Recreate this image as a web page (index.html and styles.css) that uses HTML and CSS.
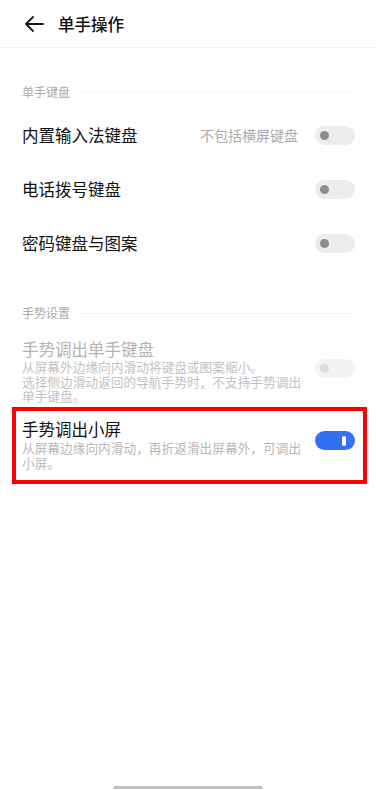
FILE: index.html
```html
<!DOCTYPE html>
<html lang="zh-CN">
<head>
<meta charset="utf-8">
<title>单手操作</title>
<link rel="stylesheet" href="styles.css">
</head>
<body>
<div class="page">
  <header class="header">
    <svg class="back" width="20" height="16" viewBox="0 0 20 16" aria-hidden="true">
      <path d="M19 8H2M9 1L2 8L9 15" fill="none" stroke="#1a1a1a" stroke-width="1.8" stroke-linecap="round" stroke-linejoin="round"/>
    </svg>
    <h1 class="title">单手操作</h1>
  </header>

  <div class="section-label first"><span>单手键盘</span></div>
  <div class="row">
    <span class="row-title">内置输入法键盘</span>
    <span class="row-hint">不包括横屏键盘</span>
    <span class="toggle"></span>
  </div>
  <div class="row">
    <span class="row-title">电话拨号键盘</span>
    <span class="toggle"></span>
  </div>
  <div class="row">
    <span class="row-title">密码键盘与图案</span>
    <span class="toggle"></span>
  </div>

  <div class="section-label second"><span>手势设置</span></div>
  <div class="row tall disabled">
    <div class="text">
      <div class="row-title">手势调出单手键盘</div>
      <div class="desc">从屏幕外边缘向内滑动将键盘或图案缩小。<br>选择侧边滑动返回的导航手势时，不支持手势调出单手键盘。</div>
    </div>
    <span class="toggle"></span>
  </div>
  <div class="row tall highlight">
    <div class="text">
      <div class="row-title">手势调出小屏</div>
      <div class="desc">从屏幕边缘向内滑动，再折返滑出屏幕外，可调出小屏。</div>
    </div>
    <span class="toggle on"></span>
  </div>

  <div class="spacer"></div>
  <div class="home-bar"></div>
</div>
</body>
</html>
```

FILE: styles.css
```css
html, body {
  margin: 0;
  padding: 0;
  background: #ffffff;
}

body {
  font-family: "Noto Sans CJK SC", "Noto Sans", sans-serif;
  color: #111111;
}

.page {
  width: 376px;
  height: 790px;
  display: flex;
  flex-direction: column;
  overflow: hidden;
}

.header {
  height: 47px;
  display: flex;
  align-items: center;
  padding-left: 24px;
  border-bottom: 1px solid #f3f3f3;
}

.back {
  display: block;
  margin-right: 14px;
  margin-top: 1px;
}

.title {
  margin: 0;
  font-size: 16.5px;
  font-weight: 500;
  line-height: 22px;
  color: #111111;
}

.section-label {
  display: flex;
  align-items: center;
  gap: 9px;
  height: 16px;
  padding: 0 20px 0 22px;
  font-size: 12px;
  line-height: 16px;
  color: #aaaaaa;
}

.section-label::after {
  content: "";
  flex: 1;
  height: 1px;
  background: #f4f4f4;
}

.section-label.first {
  margin-top: 36px;
  margin-bottom: 8px;
}

.section-label.second {
  margin-top: 35px;
  margin-bottom: 17px;
}

.row {
  display: flex;
  align-items: center;
  height: 54px;
  padding: 0 21px 0 22px;
}

.row-title {
  font-size: 16.5px;
  line-height: 22px;
  color: #111111;
}

.row > .row-title {
  flex: 1;
}

.row-hint {
  font-size: 14px;
  color: #aaaaaa;
  margin-right: 17px;
}

.row.tall {
  height: auto;
}

.text {
  flex: 1;
  min-width: 0;
}

.desc {
  width: 282px;
  font-size: 12.7px;
  line-height: 14.6px;
  color: #bbbbbb;
}

.disabled .row-title {
  color: #b3b3b3;
}

.disabled .desc {
  color: #c2c2c2;
}

.highlight {
  margin: 3px 9px 0 12px;
  padding: 7px 8px 10px 6px;
  border: 4px solid #ff0000;
}

.highlight .desc {
  line-height: 15px;
  color: #b8b8b8;
}

.highlight .toggle {
  margin-top: -6px;
}

.toggle {
  position: relative;
  flex: none;
  width: 40px;
  height: 19px;
  border-radius: 10px;
  background: #ececec;
}

.toggle::after {
  content: "";
  position: absolute;
  left: 5px;
  top: 5px;
  width: 9px;
  height: 9px;
  border-radius: 50%;
  background: #8c8c8c;
}

.disabled .toggle {
  background: #f3f3f3;
  margin-top: -4px;
}

.disabled .toggle::after {
  background: #dddddd;
}

.toggle.on {
  background: #3370f2;
}

.toggle.on::after {
  left: 27px;
  top: 4.5px;
  width: 4px;
  height: 10px;
  border-radius: 2px;
  background: #ffffff;
}

.spacer {
  flex: 1;
}

.home-bar {
  align-self: center;
  width: 150px;
  height: 3px;
  border-radius: 2px;
  background: #c2c2c2;
  margin-bottom: 1px;
}
```
